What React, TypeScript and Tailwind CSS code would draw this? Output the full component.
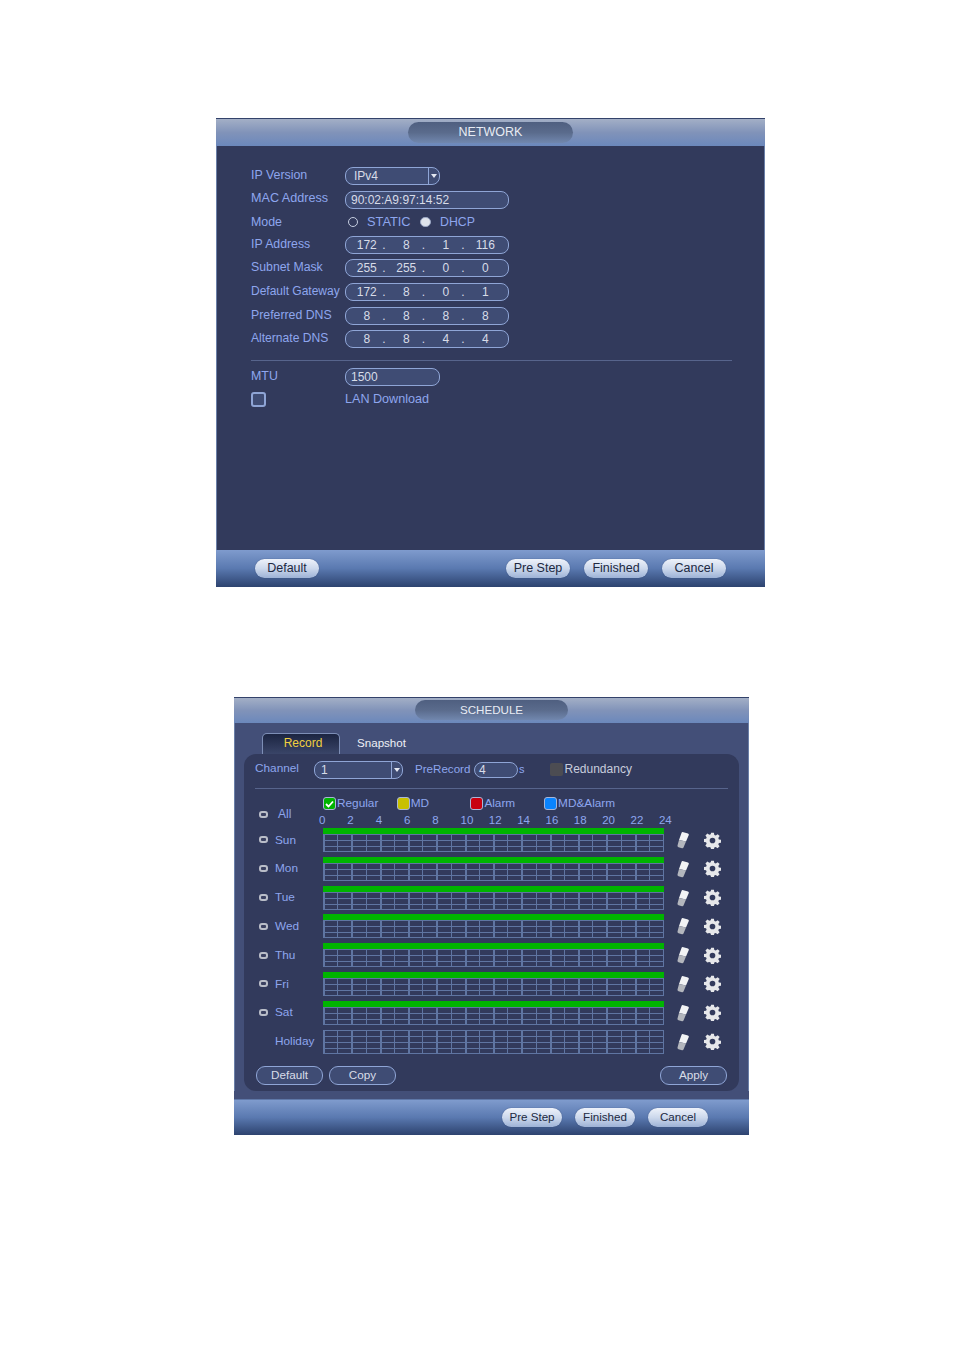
import type { ReactNode } from "react";

const ipRows = [
  { label: "IP Address", size: "text-[12.3px]", parts: ["172", "8", "1", "116"] },
  { label: "Subnet Mask", size: "text-[12.3px]", parts: ["255", "255", "0", "0"] },
  { label: "Default Gateway", size: "text-[12px]", parts: ["172", "8", "0", "1"] },
  { label: "Preferred DNS", size: "text-[12.3px]", parts: ["8", "8", "8", "8"] },
  { label: "Alternate DNS", size: "text-[12.1px]", parts: ["8", "8", "4", "4"] },
];

const days = [
  { name: "Sun", on: true },
  { name: "Mon", on: true },
  { name: "Tue", on: true },
  { name: "Wed", on: true },
  { name: "Thu", on: true },
  { name: "Fri", on: true },
  { name: "Sat", on: true },
  { name: "Holiday", on: false },
];

const hours = [0, 2, 4, 6, 8, 10, 12, 14, 16, 18, 20, 22, 24];

const legend = [
  { label: "Regular", box: "bg-[#00b400]", check: true },
  { label: "MD", box: "bg-[#c8c000]", check: false },
  { label: "Alarm", box: "bg-[#c80010]", check: false },
  { label: "MD&Alarm", box: "bg-[#0a84ff]", check: false },
];

const labelText = "leading-none text-[#8ea6ee]";

function Field({ className, children }: { className: string; children?: ReactNode }) {
  return (
    <div
      className={`rounded-[8px] border border-[#8fa5d6] bg-[#3f4c74] text-[12px] leading-none text-[#d8dce8] flex items-center ${className}`}
    >
      {children}
    </div>
  );
}

function SelectField({ value, className, textPad }: { value: string; className: string; textPad: string }) {
  return (
    <Field className={`h-[18px] ${className}`}>
      <span className={`flex-1 ${textPad}`}>{value}</span>
      <span className="w-[11px] h-full border-l border-[#8fa5d6] flex items-center justify-center">
        <span className="w-0 h-0 border-x-[3px] border-x-transparent border-t-[4px] border-t-[#e4e8f2]" />
      </span>
    </Field>
  );
}

function FooterButton({ children, className }: { children: ReactNode; className: string }) {
  return (
    <button className={`h-[19px] rounded-full bg-gradient-to-b from-[#eef2fa] via-[#ccd8ec] to-[#9db2d6] leading-none text-[#20283f] shadow-[0_0_1px_#2b3d66] ${className}`}>
      {children}
    </button>
  );
}

function OutlineButton({ children, className }: { children: ReactNode; className: string }) {
  return (
    <button className={`w-[67px] h-[19px] rounded-[9px] border border-[#8fa5d6] bg-[#3f4c74] text-[11.7px] leading-none text-[#d8dce8] ${className}`}>
      {children}
    </button>
  );
}

function TitleBar({ title, pill, className }: { title: string; pill: string; className: string }) {
  return (
    <header className={`border-t border-[#33426a] bg-gradient-to-b from-[#a3afc6] via-[#8193b9] to-[#6b88bc] flex justify-center ${className}`}>
      <div className={`rounded-full bg-gradient-to-b from-[#4f5f80] via-[#5a6b8c] to-[#7187ae] flex items-center justify-center leading-none text-[#e8ecf4] ${pill}`}>
        {title}
      </div>
    </header>
  );
}

function FooterBar({ className, children }: { className: string; children: ReactNode }) {
  return (
    <footer className={`bg-gradient-to-b from-[#7f9bcd] via-[#5a79b0] to-[#2d436f] flex items-start ${className}`}>
      {children}
    </footer>
  );
}

function Eraser() {
  return (
    <svg width="14" height="18" viewBox="0 0 14 18" className="block">
      <path d="M6.500 1 L12 2.500 Q13.200 3 12.800 4 L10 10.500 L3 9 L5.500 2 Q5.800 1 6.500 1 Z" fill="#f2f3f5" />
      <path d="M3 9 L10 10.500 L7.500 16.500 Q7 17.500 6 17.200 L2.500 16.200 Q1.200 15.800 1.500 14.500 Z" fill="#b3b6bd" />
    </svg>
  );
}

function Gear() {
  return (
    <svg width="17" height="17" viewBox="0 0 24 24" className="block">
      <path
        fillRule="evenodd"
        fill="#e6e7ea"
        d="M10 1h4l.6 3.1 2 .8L19.3 3l2.8 2.8-1.9 2.7.8 2 3 .5v4l-3 .6-.8 2 1.8 2.6-2.8 2.8-2.7-1.8-2 .8-.5 3h-4l-.6-3-2-.8L4.700 22 1.900 19.200l1.800-2.700-.8-2L0 14v-4l3-.5.8-2L2 4.800 4.800 2l2.700 1.900 2-.8z M12 8a4 4 0 1 0 0 8 4 4 0 0 0 0-8z"
      />
    </svg>
  );
}

function ScheduleGrid({ on }: { on: boolean }) {
  return (
    <div className="relative w-[341px] h-[24px]">
      <svg width="341" height="24" viewBox="0 0 341 24" className="block" shapeRendering="crispEdges">
        {[0.5, 6.5, 12.5, 18.5, 23.5].map((y) => (
          <line key={y} x1="0" x2="341" y1={y} y2={y} stroke="#5f75a2" strokeWidth="1" />
        ))}
        {Array.from({ length: 25 }, (_, i) => {
          const x = Math.min(Math.round(i * 14.17) + 0.5, 340.5);
          return (
            <line key={i} x1={x} x2={x} y1="0" y2="24" stroke="#5f75a2" strokeWidth={i % 2 === 0 ? 2 : 1} />
          );
        })}
      </svg>
      {on && <div className="absolute left-0 top-0 w-full h-[6px] bg-[#00b400]" />}
    </div>
  );
}

function DayDot() {
  return <span className="block w-[9px] h-[7px] rounded-[3px] border-2 border-[#b9bdc8] bg-[#3a4060]" />;
}

function NetworkPanel() {
  return (
    <section className="w-[549px] h-[469px] ml-[216px] flex flex-col bg-[#323a5c]">
      <TitleBar title="NETWORK" className="h-[28px] pt-[3px]" pill="w-[165px] h-[21px] text-[12.5px]" />
      <div className="flex-1 border-x border-[#6a7fa8] pl-[34px] pr-[32px] pt-[18px]">
        <div className="flex h-[23.7px] items-center">
          <span className={`w-[94px] -mt-[2px] text-[12.4px] ${labelText}`}>IP Version</span>
          <SelectField value="IPv4" className="w-[95px]" textPad="pl-[8px]" />
        </div>
        <div className="flex h-[23.7px] items-center">
          <span className={`w-[94px] -mt-[2px] text-[12.6px] ${labelText}`}>MAC Address</span>
          <Field className="h-[18px] w-[164px] pl-[5px]">90:02:A9:97:14:52</Field>
        </div>
        <div className="flex h-[21.500px] items-center">
          <span className={`w-[94px] text-[12.4px] ${labelText}`}>Mode</span>
          <span className="ml-[3px] w-[10px] h-[10px] rounded-full border border-[#c5cde0]" />
          <span className="ml-[9px] w-[44px] whitespace-nowrap text-[12.8px] leading-none text-[#8ea6ee]">STATIC</span>
          <span className="ml-[9px] w-[11px] h-[10px] rounded-full bg-[#dfe3ec] border border-[#9aa6c4]" />
          <span className="ml-[9px] text-[12.3px] leading-none text-[#8ea6ee]">DHCP</span>
        </div>
        {ipRows.map((row) => (
          <div key={row.label} className="flex h-[23.7px] items-center">
            <span className={`w-[94px] -mt-[2px] whitespace-nowrap ${row.size} ${labelText}`}>{row.label}</span>
            <Field className="h-[18px] w-[164px] pl-[1px] pr-[3px]">
              {row.parts.map((part, i) => (
                <span key={i} className="relative flex-1 text-center">
                  {part}
                  {i < 3 && <span className="absolute right-[1px] top-0">.</span>}
                </span>
              ))}
            </Field>
          </div>
        ))}
        <div className="mt-[9px] h-px bg-[#57648c]" />
        <div className="mt-[6px] flex h-[20px] items-center">
          <span className={`w-[94px] -mt-[2px] text-[12.4px] ${labelText}`}>MTU</span>
          <Field className="h-[18px] w-[95px] pl-[5px]">1500</Field>
        </div>
        <div className="flex h-[24px] items-center">
          <span className="w-[94px]">
            <span className="block w-[15px] h-[15px] rounded-[3px] border-2 border-[#8fa5d6] bg-[#3f4c74]" />
          </span>
          <span className={`text-[12.6px] ${labelText}`}>LAN Download</span>
        </div>
      </div>
      <FooterBar className="h-[37px] pt-[9px] pl-[39px]">
        <FooterButton className="w-[64px] text-[12.5px]">Default</FooterButton>
        <FooterButton className="w-[64px] ml-[187px] text-[12.5px]">Pre Step</FooterButton>
        <FooterButton className="w-[64px] ml-[14px] text-[12.5px]">Finished</FooterButton>
        <FooterButton className="w-[64px] ml-[14px] text-[12.5px]">Cancel</FooterButton>
      </FooterBar>
    </section>
  );
}

function SchedulePanel() {
  return (
    <section className="w-[515px] h-[438px] ml-[234px] mt-[110px] flex flex-col bg-[#434f78]">
      <TitleBar title="SCHEDULE" className="h-[26px] pt-[2px]" pill="w-[153px] h-[20px] text-[11.600px] pb-[1px]" />
      <div className="flex-1 border-x border-[#6a7fa8] px-[9px] flex flex-col">
        <div className="flex h-[31px] items-end pl-[18px]">
          <div className="w-[78px] h-[21px] pl-[4px] pb-[2px] rounded-t-[5px] border border-b-0 border-[#7d8eb6] bg-gradient-to-b from-[#1c2542] to-[#3a4568] flex items-center justify-center text-[12px] leading-none text-[#f0d040]">
            Record
          </div>
          <div className="w-[83px] h-[21px] pb-[2px] flex items-center justify-center text-[11.6px] leading-none text-[#eef0f6]">
            Snapshot
          </div>
        </div>
        <div className="h-[337px] rounded-[12px] bg-[#323a5c] pl-[11px] pr-[11px]">
          <div className="flex h-[34px] pb-[3px] items-center">
            <span className={`w-[59px] -mt-[2px] text-[11.8px] ${labelText}`}>Channel</span>
            <SelectField value="1" className="w-[89px]" textPad="pl-[6px]" />
            <span className={`ml-[12px] w-[59px] -mt-[2px] whitespace-nowrap text-[11.6px] ${labelText}`}>PreRecord</span>
            <Field className="w-[44px] h-[16px] pl-[4px]">4</Field>
            <span className="ml-[1px] -mt-[1px] text-[11px] leading-none text-[#8ea6ee]">s</span>
            <span className="ml-[25px] w-[13px] h-[13px] rounded-[2px] bg-[#4c4c52]" />
            <span className="ml-[2px] -mt-[1px] text-[12px] leading-none text-[#c8cddc]">Redundancy</span>
          </div>
          <div className="h-px bg-[#57648c]" />
          <div className="flex h-[39px] relative">
            <div className="w-[68px] pl-[4px] pt-[11px] flex items-center gap-[10px] h-full">
              <DayDot />
              <span className={`text-[12px] ${labelText}`}>All</span>
            </div>
            <div className="pt-[7px]">
              <div className="flex h-[15px] items-center">
                {legend.map((item) => (
                  <div key={item.label} className="w-[73.7px] flex items-center">
                    <span className={`w-[13px] h-[13px] rounded-[3px] border border-[#a9b6d8] flex items-center justify-center ${item.box}`}>
                      {item.check && (
                        <svg width="9" height="8" viewBox="0 0 9 8">
                          <path d="M1 4 L3.500 6.500 L8 1.500" fill="none" stroke="#fff" strokeWidth="1.800" />
                        </svg>
                      )}
                    </span>
                    <span className="ml-[1px] mt-[1px] text-[11.8px] leading-none text-[#8ea6ee] whitespace-nowrap">{item.label}</span>
                  </div>
                ))}
              </div>
              <div className="flex -ml-[15px] h-[15px] items-end">
                {hours.map((h) => (
                  <span key={h} className={`w-[28.35px] text-center text-[11.5px] leading-none text-[#8ea6ee] ${h >= 10 ? "pl-[6px]" : ""}`}>
                    {h}
                  </span>
                ))}
              </div>
            </div>
          </div>
          <div className="flex flex-col gap-[4.8px]">
            {days.map((day) => (
              <div key={day.name} className="flex h-[24px] items-center">
                <div className="w-[68px] pl-[4px] flex items-center">
                  <span className="w-[9px]">{day.on && <DayDot />}</span>
                  <span className={`ml-[7px] mt-[1px] text-[11.800px] ${labelText}`}>{day.name}</span>
                </div>
                <ScheduleGrid on={day.on} />
                <span className="ml-[12px] w-[14px]"><Eraser /></span>
                <span className="ml-[14px]"><Gear /></span>
              </div>
            ))}
          </div>
          <div className="mt-[12px] flex ml-[1px]">
            <OutlineButton className="">Default</OutlineButton>
            <OutlineButton className="ml-[6px]">Copy</OutlineButton>
            <OutlineButton className="ml-auto mr-[1px]">Apply</OutlineButton>
          </div>
        </div>
      </div>
      <FooterBar className="h-[36px] pt-[8px] pl-[268px] border-t border-[#5f78a8] mt-[8px]">
        <FooterButton className="w-[60px] text-[11.6px] pb-[2px]">Pre Step</FooterButton>
        <FooterButton className="w-[60px] ml-[13px] text-[11.6px] pb-[2px]">Finished</FooterButton>
        <FooterButton className="w-[60px] ml-[13px] text-[11.6px] pb-[2px]">Cancel</FooterButton>
      </FooterBar>
    </section>
  );
}

export default function App() {
  return (
    <div className="min-h-[1350px] bg-white pt-[118px] font-['Liberation_Sans',Arial,sans-serif]">
      <NetworkPanel />
      <SchedulePanel />
    </div>
  );
}
